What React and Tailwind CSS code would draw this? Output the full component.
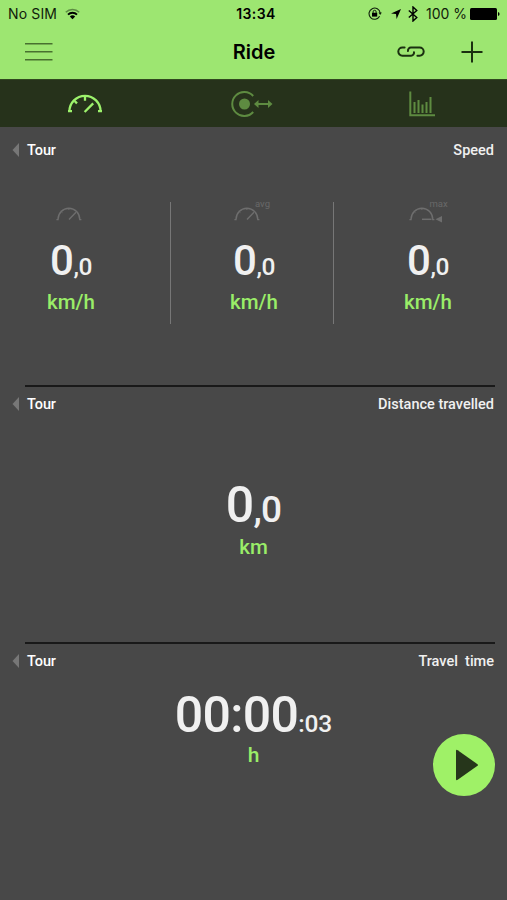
const AVG = "avg";
const MAX = "max";

function Gauge({ kind }) {
  return (
    <svg className="block h-[24px] w-[44px] overflow-visible" viewBox="0 0 44 24" fill="none" stroke="#6e6e6e">
      <path d="M4.4 17.6H6A10.9 11.4 0 0 1 27.8 17.6H29.4" strokeWidth="1.4" />
      <path d="M8.8 9.2l1.6 1.4M16.9 6v2" strokeWidth="1" />
      {kind === MAX ? (
        <>
          <path d="M17 17.3H26.5" strokeWidth="1.5" />
          <path d="M30.5 17.2L37 14V20.4Z" fill="#6e6e6e" stroke="none" />
        </>
      ) : (
        <path d="M17 17.6L24 10.2" strokeWidth="1.4" />
      )}
      {kind && (
        <text
          x={kind === MAX ? 24.5 : 25}
          y="4.8"
          fill="#686868"
          stroke="none"
          fontSize="9.5"
          fontFamily="Roboto, sans-serif"
        >
          {kind}
        </text>
      )}
    </svg>
  );
}

function SpeedValue({ kind, className }) {
  return (
    <div className={className}>
      <Gauge kind={kind} />
      <div className="mt-[10px] h-[50px] w-[60px] text-center text-[42px] leading-[50px] font-medium tracking-[-0.4px] whitespace-nowrap">
        0<span className="text-[24.5px]">,0</span>
      </div>
      <div className="mt-[4px] h-[24px] w-[60px] text-center text-[20.5px] leading-[24px] font-medium text-[#9aed68]">
        km/h
      </div>
    </div>
  );
}

function SectionHeader({ title }) {
  return (
    <div className="flex h-[20px] items-center pr-[13px] pl-[12px] text-[14.5px] font-medium">
      <svg className="mr-[8px] h-[14px] w-[7px]" viewBox="0 0 7 14" fill="#777">
        <path d="M0.5 7L7 0V14Z" />
      </svg>
      <span className="relative top-px tracking-[-0.1px] text-white">Tour</span>
      <span className="relative top-px ml-auto whitespace-pre">{title}</span>
    </div>
  );
}

function StatusBar() {
  return (
    <div className="flex h-[27px] items-center pr-[7px] pl-[8px] font-['Inter',sans-serif] text-[14px] text-[#10200a]">
      <div className="flex w-[212px] items-center">
        <span className="tracking-[0.15px]">No SIM</span>
        <svg className="ml-[8px] h-[12px] w-[15px]" viewBox="0 0 15 12" fill="none" stroke="currentColor">
          <path d="M.8 4.2A9.4 9.4 0 0 1 14.2 4.2" strokeWidth="1.5" opacity=".45" />
          <path d="M3 6.6A6.3 6.3 0 0 1 12 6.6" strokeWidth="1.9" stroke="#000" />
          <path d="M7.5 11.3L4.8 8.6A3.8 3.8 0 0 1 10.2 8.6Z" fill="#000" stroke="none" />
        </svg>
      </div>
      <div className="w-[72px] text-center text-[14px] font-semibold tracking-[0.4px] text-black">13:34</div>
      <div className="ml-auto flex items-center">
        <svg className="h-[13px] w-[14px]" viewBox="0 0 14 13" fill="none" stroke="currentColor">
          <path d="M11.6 9.3A5.6 5.6 0 1 1 12.2 6" strokeWidth="1.1" />
          <path d="M10.5 5.5H13.8L12.2 8Z" fill="currentColor" stroke="none" />
          <rect x="4" y="5.8" width="5.2" height="3.8" fill="#000" stroke="none" />
          <path d="M5.1 6V4.8A1.5 1.5 0 0 1 8.1 4.8V6" strokeWidth="1" />
        </svg>
        <svg className="ml-[9px] h-[10px] w-[10px]" viewBox="0 0 10 10" fill="#000">
          <path d="M10 0L5.6 10L5 5.1L0 4.4Z" />
        </svg>
        <svg className="ml-[7px] h-[16px] w-[10px]" viewBox="0 0 10 16" fill="none" stroke="#000" strokeWidth="1.4">
          <path d="M.8 4.5L8.8 11.4L5 15V1L8.8 4.6L.8 11.5" />
        </svg>
        <span className="ml-[8px] w-[42px] text-[14px] whitespace-nowrap">100 %</span>
        <svg className="ml-[2px] h-[12px] w-[30px]" viewBox="0 0 30 12">
          <rect width="27" height="12" rx="1.5" fill="#000" />
          <path d="M28 4Q29.6 4.5 29.6 6T28 8Z" fill="#000" />
        </svg>
      </div>
    </div>
  );
}

export default function App() {
  return (
    <div className="relative h-[900px] w-[507px] overflow-hidden bg-[#484848] font-['Roboto',sans-serif] text-[#f0f0f0]">
      <header className="h-[79px] bg-[#9de671]">
        <StatusBar />
        <div className="flex h-[50px] items-center pr-[24px] pl-[25px]">
          <svg className="h-[19px] w-[28px]" viewBox="0 0 28 19" stroke="#48702f" strokeWidth="1.6">
            <path d="M0 0.8H27.5M0 8.8H27.5M0 16.8H27.5" />
          </svg>
          <h1 className="ml-[152px] w-[98px] text-center font-['Inter',sans-serif] text-[20px] font-semibold text-black">
            Ride
          </h1>
          <svg
            className="ml-auto h-[12px] w-[28px]"
            viewBox="0 0 28 12"
            fill="none"
            stroke="#1b3010"
            strokeWidth="2"
            strokeLinecap="round"
          >
            <path d="M7.6 1.5H5.4A4.1 4.1 0 0 0 5.4 9.7H14A3 3 0 0 0 17 6.2" />
            <path d="M20.4 9.7H22.6A4.1 4.1 0 0 0 22.6 1.5H14A3 3 0 0 0 11 5" />
          </svg>
          <svg className="ml-[36px] h-[22px] w-[22px]" viewBox="0 0 22 22" stroke="#1b3010" strokeWidth="2">
            <path d="M11 0.5V21.5M0.5 11H21.5" />
          </svg>
        </div>
      </header>

      <nav className="grid h-[48px] grid-cols-3 items-center justify-items-center border-t border-[#31471f] bg-[#26321b]">
        <svg className="h-[20px] w-[36px]" viewBox="0 0 36 20" fill="none" stroke="#9df26c" strokeWidth="2.3">
          <path d="M1 17.2H5M31 17.2H35" />
          <path d="M2.4 17.6A15.6 15.8 0 0 1 33.6 17.6" />
          <path d="M7.6 7L10 9.4M18 1.4V6.8M17.6 18L26.2 9.4" />
        </svg>
        <svg className="mr-[4px] h-[26px] w-[42px]" viewBox="0 0 42 26" fill="none" stroke="#5e8b41" strokeWidth="2">
          <path d="M22.2 5A12 12 0 1 0 22.2 21" />
          <circle cx="13.5" cy="13" r="5.5" fill="#5e8b41" stroke="none" />
          <path d="M26 13H38" />
          <path d="M23 13L27.5 9V17ZM41.5 13L37 9V17Z" fill="#5e8b41" stroke="none" />
        </svg>
        <svg className="mr-[2px] h-[26px] w-[26px]" viewBox="0 0 26 26" fill="none" stroke="#5e8b41" strokeWidth="2">
          <path d="M1.3 0.5V24.3H26" />
          <path d="M5.5 22V11M9.5 22V9M13.5 22V13.5M17.5 22V11M21.5 22V6" />
        </svg>
      </nav>

      <section className="h-[258px] pt-[13px]">
        <SectionHeader title="Speed" />
        <div className="mt-[42px] flex h-[122px]">
          <SpeedValue className="w-[170px] pl-[41px] *:first:ml-[11px]" />
          <div className="w-[164px] border-x border-[#777] pl-[53px]">
            <SpeedValue kind={AVG} className="w-[60px] *:first:ml-[6px]" />
          </div>
          <SpeedValue kind={MAX} className="pl-[64px] *:first:ml-[7px]" />
        </div>
      </section>

      <section className="h-[257px]">
        <div className="mr-[12px] ml-[25px] h-[2px] bg-[#191919]" />
        <div className="h-[7px]" />
        <SectionHeader title="Distance travelled" />
        <div className="mt-[61px] h-[60px] text-center text-[50px] leading-[60px] font-medium tracking-[-0.7px]">
          0<span className="text-[37px]">,0</span>
        </div>
        <div className="text-center text-[20.5px] leading-[24px] font-medium text-[#9aed68]">km</div>
      </section>

      <section>
        <div className="mr-[12px] ml-[25px] h-[2px] bg-[#191919]" />
        <div className="h-[7px]" />
        <SectionHeader title="Travel  time" />
        <div className="mt-[14px] h-[58px] text-center text-[50px] leading-[60px] font-medium tracking-[-0.7px]">
          00:00<span className="text-[24.5px] tracking-[-0.1px]">:03</span>
        </div>
        <div className="text-center text-[21px] leading-[24px] font-medium text-[#9aed68]">h</div>
      </section>

      {/* Floating start button */}
      <button className="absolute right-[12px] bottom-[104px] h-[62px] w-[62px] rounded-full bg-[#9ff167]">
        <svg className="ml-[22px] h-[32px] w-[24px]" viewBox="0 0 24 32" fill="#26361b">
          <path d="M1 2Q1 0 2.7 1.2L22.5 15.2Q23.5 16 22.5 16.8L2.7 30.8Q1 32 1 30Z" />
        </svg>
      </button>
    </div>
  );
}
